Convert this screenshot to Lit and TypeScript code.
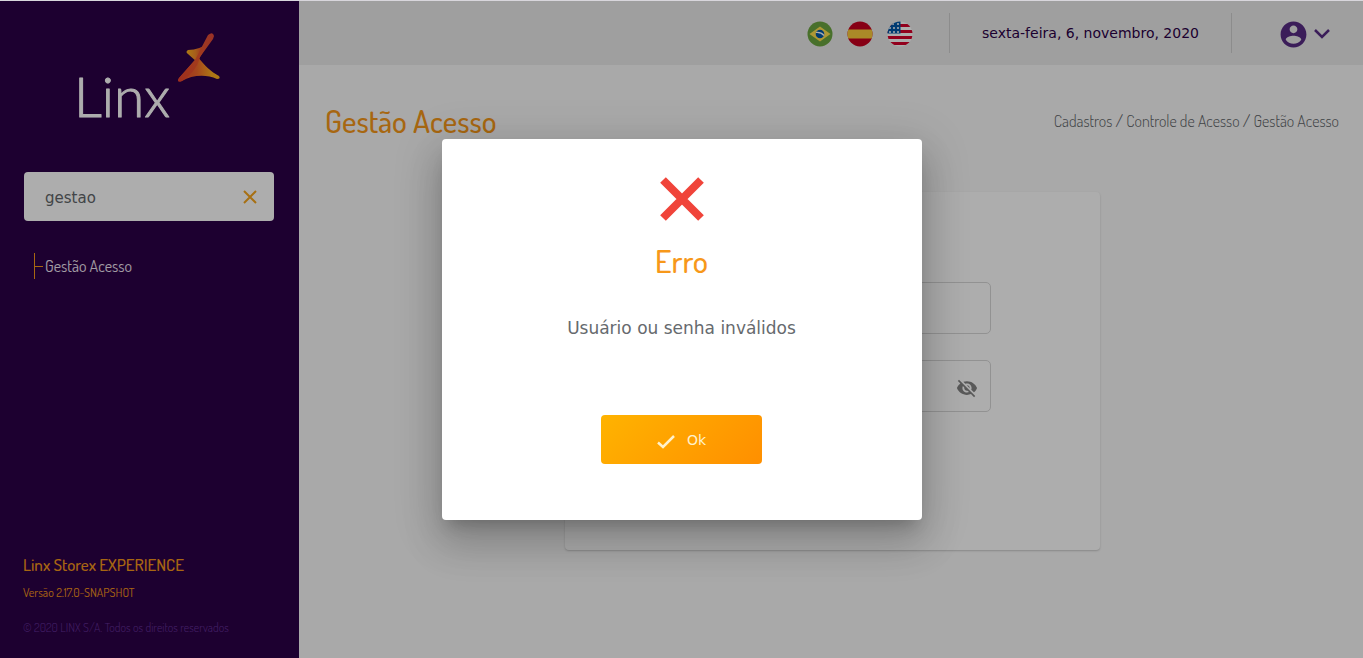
import { LitElement, html, css, svg } from "lit";
import { customElement, state } from "lit/decorators.js";

const star = (cx: number, cy: number) => svg`<circle cx=${cx} cy=${cy} r="1" fill="#fff" />`;

@customElement("linx-logo")
class LinxLogo extends LitElement {
  static styles = css`
    :host { display: block; }
    svg { display: block; width: 156px; height: 104px; }
    .word { font: 300 55px Lato, "Open Sans", sans-serif; fill: #fff; stroke: #fff; stroke-width: 1; stroke-linejoin: round; }
  `;
  render() {
    return html`<svg viewBox="-6 0 156 104" role="img" aria-label="Linx">
      <defs>
        <linearGradient id="blade" x1="0" y1="1" x2="1" y2="0">
          <stop offset="0" stop-color="#e8432d" /><stop offset=".5" stop-color="#f0582a" /><stop offset="1" stop-color="#e04a3a" />
        </linearGradient>
        <linearGradient id="foot" x1="0" y1="0" x2="1" y2="0">
          <stop offset="0" stop-color="#e8432d" /><stop offset=".45" stop-color="#f4682a" /><stop offset=".8" stop-color="#ffac20" /><stop offset="1" stop-color="#ffb41e" />
        </linearGradient>
        <linearGradient id="wing" x1="0" y1="0" x2="1" y2="0">
          <stop offset="0" stop-color="#ffb41e" /><stop offset=".4" stop-color="#f58a28" /><stop offset=".7" stop-color="#e8502d" />
        </linearGradient>
      </defs>
      <text class="word" x="-4" y="84">Linx</text>
      <path fill="url(#wing)" d="M110 17Q107 19 110 21L119 29L131 9Q122 17 110 17Z" />
      <path fill="url(#foot)" d="M120 24C126 32 133 39 141 43Q143 46 139 46C128 41 114 42 104 48Q98 50 101 45L116 28Z" />
      <path fill="url(#blade)" d="M130 2Q135 -2 136 3L135 6L122 24Q119 38 104 48Q98 50 101 45L117 27Z" />
    </svg>`;
  }
}

@customElement("side-bar")
class SideBar extends LitElement {
  @state() private query = "gestao";
  static styles = css`
    :host {
      box-sizing: border-box; width: 299px; flex: none; display: flex; flex-direction: column;
      padding: 32px 25px 21px 23px; background: #2c0047; color: #fff;
      font-family: Dosis, "Liberation Sans Narrow", "Arial Narrow", "Roboto Condensed", "Liberation Sans", sans-serif;
    }
    linx-logo { padding-left: 49px; }
    .search { display: flex; align-items: center; margin: 35px 0 0 1px; height: 49px; background: #fff; border-radius: 4px; }
    .search input {
      flex: 1; min-width: 0; border: 0; outline: 0; background: none; padding: 2px 0 0 21px; height: 100%; box-sizing: border-box;
      font: 15px "DejaVu Sans", Verdana, sans-serif; color: #62666a;
    }
    .clear { border: 0; background: none; padding: 0 16px; height: 100%; display: flex; align-items: center; }
    ul { list-style: none; margin: 32px 0 0 11px; padding: 0; }
    li { display: flex; align-items: center; height: 26px; border-left: 1px solid #f7981a; }
    li::before { content: ""; width: 8px; border-top: 1px solid #f7981a; margin-right: 2px; }
    a { color: #f0e8f4; font-size: 16px; text-decoration: none; }
    footer { margin-top: auto; }
    .product { margin: 0; font-size: 17px; line-height: 24px; font-weight: 500; color: #f7981a; }
    .version { margin: 6px 0 0; font-size: 12px; line-height: 20px; color: #f7981a; }
    .rights { margin: 16px 0 0; font-size: 12px; line-height: 18px; font-weight: 300; color: #64309a; }
  `;
  render() {
    return html`
      <linx-logo></linx-logo>
      <div class="search">
        <input aria-label="Pesquisar" .value=${this.query} @input=${(e: Event) => (this.query = (e.target as HTMLInputElement).value)} />
        <button class="clear" aria-label="Limpar" @click=${() => (this.query = "")}>
          <svg width="16" height="16" viewBox="0 0 16 16" fill="none" stroke="#f7a61d" stroke-width="2"><path d="M2 2L14 14M14 2L2 14" /></svg>
        </button>
      </div>
      <ul><li><a href="#gestao">Gestão Acesso</a></li></ul>
      <footer>
        <p class="product">Linx Storex EXPERIENCE</p>
        <p class="version">Versão 2.17.0-SNAPSHOT</p>
        <p class="rights">© 2020 LINX S/A. Todos os direitos reservados</p>
      </footer>`;
  }
}

@customElement("top-bar")
class TopBar extends LitElement {
  static styles = css`
    :host {
      box-sizing: border-box; display: flex; align-items: center; justify-content: flex-end; height: 64px;
      padding-right: 32px; background: #ebebeb; font: 14px "DejaVu Sans", Verdana, sans-serif; color: #2c0047;
    }
    button { border: 0; background: none; padding: 0; display: flex; align-items: center; }
    .langs { display: flex; gap: 14px; margin-right: 36px; padding-top: 2px; }
    .date { box-sizing: border-box; height: 40px; line-height: 40px; padding: 0 32px; border: solid #cfcfcf; border-width: 0 1px; }
    .user { margin-left: 46px; gap: 4px; padding-top: 2px; }
  `;
  render() {
    return html`
      <div class="langs">
        <button aria-label="Português"><svg width="26" height="26" viewBox="0 0 26 26">
          <circle cx="13" cy="13" r="12.5" fill="#6ba540" /><path d="M13 5.5L23.5 13L13 20.5L2.5 13Z" fill="#ffe04f" />
          <circle cx="13" cy="13" r="4.3" fill="#0058a8" /><path d="M9 11.5Q14 11 17 14.5" stroke="#fff" stroke-width="1.2" fill="none" /></svg></button>
        <button aria-label="Español"><svg width="26" height="26" viewBox="0 0 26 26">
          <clipPath id="es"><circle cx="13" cy="13" r="12.5" /></clipPath>
          <g clip-path="url(#es)"><path fill="#c80020" d="M0 0H26V26H0Z" /><path fill="#fbcc3c" d="M0 8.5H26V17.5H0Z" /></g></svg></button>
        <button aria-label="English"><svg width="26" height="26" viewBox="0 0 26 26">
          <clipPath id="us"><circle cx="13" cy="13" r="12.5" /></clipPath>
          <g clip-path="url(#us)"><path fill="#fff" d="M0 0H26V26H0Z" />
            <path stroke="#d8002c" stroke-width="3" d="M0 4.5H26M0 10.5H26M0 16.5H26M0 22.5H26" />
            <path fill="#0058a8" d="M0 0H13.5V12.5H0Z" />
            ${[[6, 3], [11, 3], [3, 7], [7, 7], [11, 7], [3, 11], [7, 11], [11, 11]].map(([x, y]) => star(x, y))}</g></svg></button>
      </div>
      <time class="date" datetime="2020-11-06">sexta-feira, 6, novembro, 2020</time>
      <button class="user" aria-label="Conta">
        <svg width="31" height="31" viewBox="0 0 24 24" fill="#582c83"><path d="M12 2C6.48 2 2 6.48 2 12s4.48 10 10 10 10-4.48 10-10S17.52 2 12 2zm0 3c1.66 0 3 1.34 3 3s-1.34 3-3 3-3-1.34-3-3 1.34-3 3-3zm0 14.2c-2.5 0-4.71-1.28-6-3.22.03-1.99 4-3.08 6-3.08 1.99 0 5.97 1.09 6 3.08-1.29 1.94-3.5 3.22-6 3.22z" /></svg>
        <svg width="18" height="12" viewBox="0 0 18 12" fill="none" stroke="#582c83" stroke-width="2.5"><path d="M2 2L9 9L16 2" /></svg>
      </button>`;
  }
}

@customElement("access-page")
class AccessPage extends LitElement {
  static styles = css`
    :host {
      display: block; padding: 34px 24px 0 26px; color: #606468;
      font-family: Dosis, "Liberation Sans Narrow", "Arial Narrow", "Roboto Condensed", "Liberation Sans", sans-serif;
    }
    .head { display: flex; justify-content: space-between; align-items: center; }
    h1 { margin: 0; font-size: 31px; line-height: 44px; font-weight: 500; color: #f7981a; }
    nav { font-size: 16px; }
    nav a { font-weight: 300; }
    a { color: inherit; text-decoration: none; }
    .card {
      box-sizing: border-box; width: 100%; max-width: 535px; margin: 49px auto 0;
      padding: 90px 109px 138px; background: #fff; border-radius: 4px; box-shadow: 0 1px 2px rgba(0, 0, 0, .2);
      display: flex; flex-direction: column; gap: 26px;
    }
    .field { box-sizing: border-box; height: 52px; display: flex; align-items: center; border: 1px solid #d8d8d8; border-radius: 5px; }
    input { flex: 1; min-width: 0; height: 100%; border: 0; outline: 0; padding: 0 16px; background: none; box-sizing: border-box; }
    button { border: 0; background: none; padding: 4px 12px 0; display: flex; }
  `;
  render() {
    return html`
      <div class="head">
        <h1>Gestão Acesso</h1>
        <nav><a href="#cadastros">Cadastros</a> / <a href="#controle">Controle de Acesso</a> / <a href="#gestao">Gestão Acesso</a></nav>
      </div>
      <form class="card">
        <div class="field"><input aria-label="Usuário" /></div>
        <div class="field">
          <input type="password" aria-label="Senha" />
          <button type="button" aria-label="Mostrar senha"><svg width="22" height="22" viewBox="0 0 24 24" fill="#848484"><path d="M12 7c2.76 0 5 2.24 5 5 0 .65-.13 1.26-.36 1.83l2.92 2.92c1.51-1.26 2.7-2.89 3.43-4.75-1.73-4.39-6-7.5-11-7.5-1.4 0-2.74.25-3.98.7l2.16 2.16C10.74 7.13 11.35 7 12 7zM2 4.27l2.28 2.28.46.46C3.08 8.3 1.78 10.02 1 12c1.73 4.39 6 7.5 11 7.5 1.55 0 3.03-.3 4.38-.84l.42.42L19.73 22 21 20.73 3.27 3 2 4.27zM7.53 9.8l1.55 1.55c-.05.21-.08.43-.08.65 0 1.66 1.34 3 3 3 .22 0 .44-.03.65-.08l1.55 1.55c-.67.33-1.41.53-2.2.53-2.76 0-5-2.24-5-5 0-.79.2-1.53.53-2.2zm4.31-.78l3.15 3.15.02-.16c0-1.66-1.34-3-3-3l-.17.01z" /></svg></button>
        </div>
      </form>`;
  }
}

@customElement("error-dialog")
class ErrorDialog extends LitElement {
  static styles = css`
    :host { position: absolute; inset: 0; display: flex; align-items: center; justify-content: center; background: rgba(0, 0, 0, .32); }
    dialog {
      position: static; box-sizing: border-box; width: 480px; margin: 0; padding: 38px 24px 56px; border: 0; border-radius: 4px;
      display: flex; flex-direction: column; align-items: center; background: #fff; color: #666a6e;
      font-family: "DejaVu Sans", Verdana, sans-serif;
      box-shadow: 0 11px 15px -7px rgba(0, 0, 0, .2), 0 24px 38px 3px rgba(0, 0, 0, .14), 0 9px 46px 8px rgba(0, 0, 0, .12);
    }
    h2 {
      margin: 20px 0 0; font-weight: 500; font-size: 32px; line-height: 40px; color: #f7981a;
      font-family: Dosis, "Liberation Sans Narrow", "Arial Narrow", "Roboto Condensed", "Liberation Sans", sans-serif;
    }
    p { margin: 35px 0 0; font-size: 17px; line-height: 24px; }
    button {
      margin-top: 75px; width: 161px; height: 49px; border: 0; border-radius: 4px; color: #fff1cc;
      background: linear-gradient(135deg, #ffb300, #ff8f00); font: 14px "DejaVu Sans", Verdana, sans-serif;
      display: flex; align-items: center; justify-content: center; gap: 12px;
    }
    .tick { margin-top: 4px; }
  `;
  render() {
    return html`<dialog open aria-labelledby="title">
      <svg width="44" height="44" viewBox="0 0 44 44" stroke="#f0443a" stroke-width="8"><path d="M3 3L41 41M41 3L3 41" /></svg>
      <h2 id="title">Erro</h2>
      <p>Usuário ou senha inválidos</p>
      <button><svg class="tick" width="18" height="14" viewBox="0 0 18 14" fill="none" stroke="#fff1cc" stroke-width="2.5"><path d="M1 7.5L6 12L17 1" /></svg>Ok</button>
    </dialog>`;
  }
}

@customElement("app-root")
class AppRoot extends LitElement {
  static styles = css`
    :host { box-sizing: border-box; position: relative; display: flex; min-height: 100vh; background: #f9f9f9; border-top: 1px solid #d8d6dc; }
    main { flex: 1; min-width: 0; }
  `;
  render() {
    return html`<side-bar></side-bar><main><top-bar></top-bar><access-page></access-page></main><error-dialog></error-dialog>`;
  }
}
